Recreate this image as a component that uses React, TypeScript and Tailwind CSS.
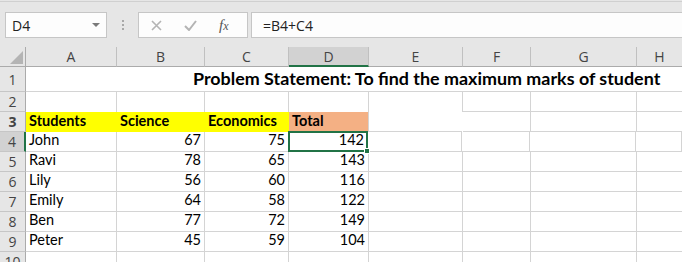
const colW = ["w-[91px]", "w-[88px]", "w-[84px]", "w-[80px]", "w-[94px]", "w-[68px]", "w-[106px]", "w-[46px]"];
const letters = ["A", "B", "C", "D", "E", "F", "G", "H"];

const students = [
  { name: "John", sci: 67, eco: 75, total: 142 },
  { name: "Ravi", sci: 78, eco: 65, total: 143 },
  { name: "Lily", sci: 56, eco: 60, total: 116 },
  { name: "Emily", sci: 64, eco: 58, total: 122 },
  { name: "Ben", sci: 77, eco: 72, total: 149 },
  { name: "Peter", sci: 45, eco: 59, total: 104 },
];

function RowHead({ n, active }: { n: number | string; active?: boolean }) {
  return (
    <div
      className={`w-[26px] shrink-0 flex items-center justify-center border-b border-[#c6c6c6] text-[14px] text-[#444] font-['Open_Sans'] ${
        active ? "bg-[#d2d2d2] border-r-2 border-r-[#217346]" : "bg-[#e6e6e6] border-r border-r-[#ababab]"
      }`}
    >
      {n}
    </div>
  );
}

function Cell({ i, children, cls = "" }: { i: number; children?: React.ReactNode; cls?: string }) {
  return (
    <div className={`${colW[i]} shrink-0 flex items-end px-[3px] pb-[2px] leading-[18px] whitespace-nowrap ${cls}`}>
      {children}
    </div>
  );
}

const grid = "border-r border-b border-[#d4d4d4]";

export default function App() {
  return (
    <div className="w-[682px] h-[262px] overflow-hidden bg-white font-['Lato'] text-[14.5px] text-black">
      {/* Formula bar */}
      <div className="h-[47px] bg-[#e6e6e6] pt-px">
        <div className="border-t border-[#d0d0d0] flex items-start pt-[10px] pl-[5px]">
          <div className="w-[102px] h-[26px] bg-[#fdfdfd] border border-[#c6c6c6] flex items-center pl-[6px] pr-[6px] justify-between">
            <span className="font-['Open_Sans'] text-[14px] text-[#222]">D4</span>
            <svg width="8" height="4" viewBox="0 0 8 4"><path d="M0 0h8L4 4z" fill="#7a7a7a" /></svg>
          </div>
          <div className="w-[31px] h-[26px] flex flex-col items-center justify-center gap-[2px]">
            <div className="w-[2px] h-[2px] bg-[#a8a8a8]" />
            <div className="w-[2px] h-[2px] bg-[#a8a8a8]" />
            <div className="w-[2px] h-[2px] bg-[#a8a8a8]" />
          </div>
          <div className="w-[110px] h-[26px] bg-[#fdfdfd] border border-[#c6c6c6] flex items-center pl-[12px] gap-[22px]">
            <svg width="11" height="11" viewBox="0 0 11 11"><path d="M1 1l9 9M10 1l-9 9" stroke="#b4b4b4" strokeWidth="1.6" /></svg>
            <svg width="13" height="11" viewBox="0 0 13 11"><path d="M1 6l4 4 7-9" stroke="#b4b4b4" strokeWidth="2" fill="none" /></svg>
            <span className="font-['Liberation_Serif'] italic text-[15px] text-[#555] leading-none">
              f<span className="text-[12px]">x</span>
            </span>
          </div>
          <div className="ml-[3px] flex-1 h-[26px] bg-[#fdfdfd] border border-r-0 border-[#c6c6c6] flex items-center pl-[11px] font-['Open_Sans'] text-[14px] text-[#222]">
            =B4+C4
          </div>
        </div>
      </div>

      {/* Column headers */}
      <div className="flex h-[20px] font-['Open_Sans'] text-[14px] text-[#444]">
        <div className="w-[26px] shrink-0 bg-[#e6e6e6] border-r border-b border-[#ababab] flex items-end justify-end p-[2px]">
          <svg width="13" height="13" viewBox="0 0 13 13"><path d="M13 0V13H0z" fill="#b4b4b4" /></svg>
        </div>
        {letters.map((l, i) => (
          <div
            key={l}
            className={`${colW[i]} shrink-0 flex items-center justify-center border-r border-[#c0c0c0] ${
              i === 3 ? "bg-[#d2d2d2] border-b-2 border-b-[#217346]" : "bg-[#e6e6e6] border-b border-b-[#ababab]"
            }`}
          >
            {l}
          </div>
        ))}
      </div>

      {/* Row 1 */}
      <div className="flex h-[25px]">
        <RowHead n={1} />
        <div className="flex-1 border-b border-[#d4d4d4] flex items-end pl-[167px] pb-[2px] leading-[22px] font-bold text-[17.9px] whitespace-nowrap">
          Problem Statement: To find the maximum marks of student
        </div>
      </div>

      {/* Row 2 */}
      <div className="flex h-[20px]">
        <RowHead n={2} />
        <Cell i={0} cls="border-r border-[#d4d4d4]" />
        <Cell i={1} cls="border-r border-[#d4d4d4]" />
        <Cell i={2} cls="border-r border-[#d4d4d4]" />
        <Cell i={3} cls="border-r border-[#d4d4d4]" />
        <Cell i={4} cls="border-r border-[#d4d4d4]" />
        <Cell i={5} cls={grid} />
        <Cell i={6} cls={grid} />
        <Cell i={7} cls={grid} />
      </div>

      {/* Row 3 */}
      <div className="flex h-[20px] font-bold">
        <RowHead n={3} />
        <Cell i={0} cls="bg-[#ffff00]">Students</Cell>
        <Cell i={1} cls="bg-[#ffff00]">Science</Cell>
        <Cell i={2} cls="bg-[#ffff00]">Economics</Cell>
        <Cell i={3} cls="bg-[#f4b084] border-r border-[#d4d4d4]">Total</Cell>
        <Cell i={4} />
        <Cell i={5} cls={grid} />
        <Cell i={6} cls={grid} />
        <Cell i={7} cls={grid} />
      </div>

      {/* Data rows */}
      {students.map((s, r) => (
        <div key={s.name} className="flex h-[20px]">
          <RowHead n={r + 4} active={r === 0} />
          <Cell i={0} cls={grid}>{s.name}</Cell>
          <Cell i={1} cls={`${grid} justify-end`}>{s.sci}</Cell>
          <Cell i={2} cls={`${grid} justify-end`}>{s.eco}</Cell>
          {r === 0 ? (
            <div className={`${colW[3]} shrink-0 relative -ml-px -mt-px h-[21px] border-2 border-[#217346] flex items-end justify-end pr-[2px] pb-px leading-[18px]`}>
              {s.total}
              <div className="absolute -right-[4px] -bottom-[4px] w-[6px] h-[6px] bg-[#217346] border border-white" />
            </div>
          ) : (
            <Cell i={3} cls={`${grid} justify-end`}>{s.total}</Cell>
          )}
          <Cell i={4} cls={`${grid} ${r === 0 ? "border-t border-t-[#d4d4d4] -mt-px h-[21px]" : ""}`} />
          <Cell i={5} cls={grid} />
          <Cell i={6} cls={grid} />
          <Cell i={7} cls={grid} />
        </div>
      ))}

      {/* Row 10 */}
      <div className="flex h-[20px]">
        <RowHead n={10} />
        {letters.map((l, i) => (
          <Cell key={l} i={i} cls={grid} />
        ))}
      </div>
    </div>
  );
}
